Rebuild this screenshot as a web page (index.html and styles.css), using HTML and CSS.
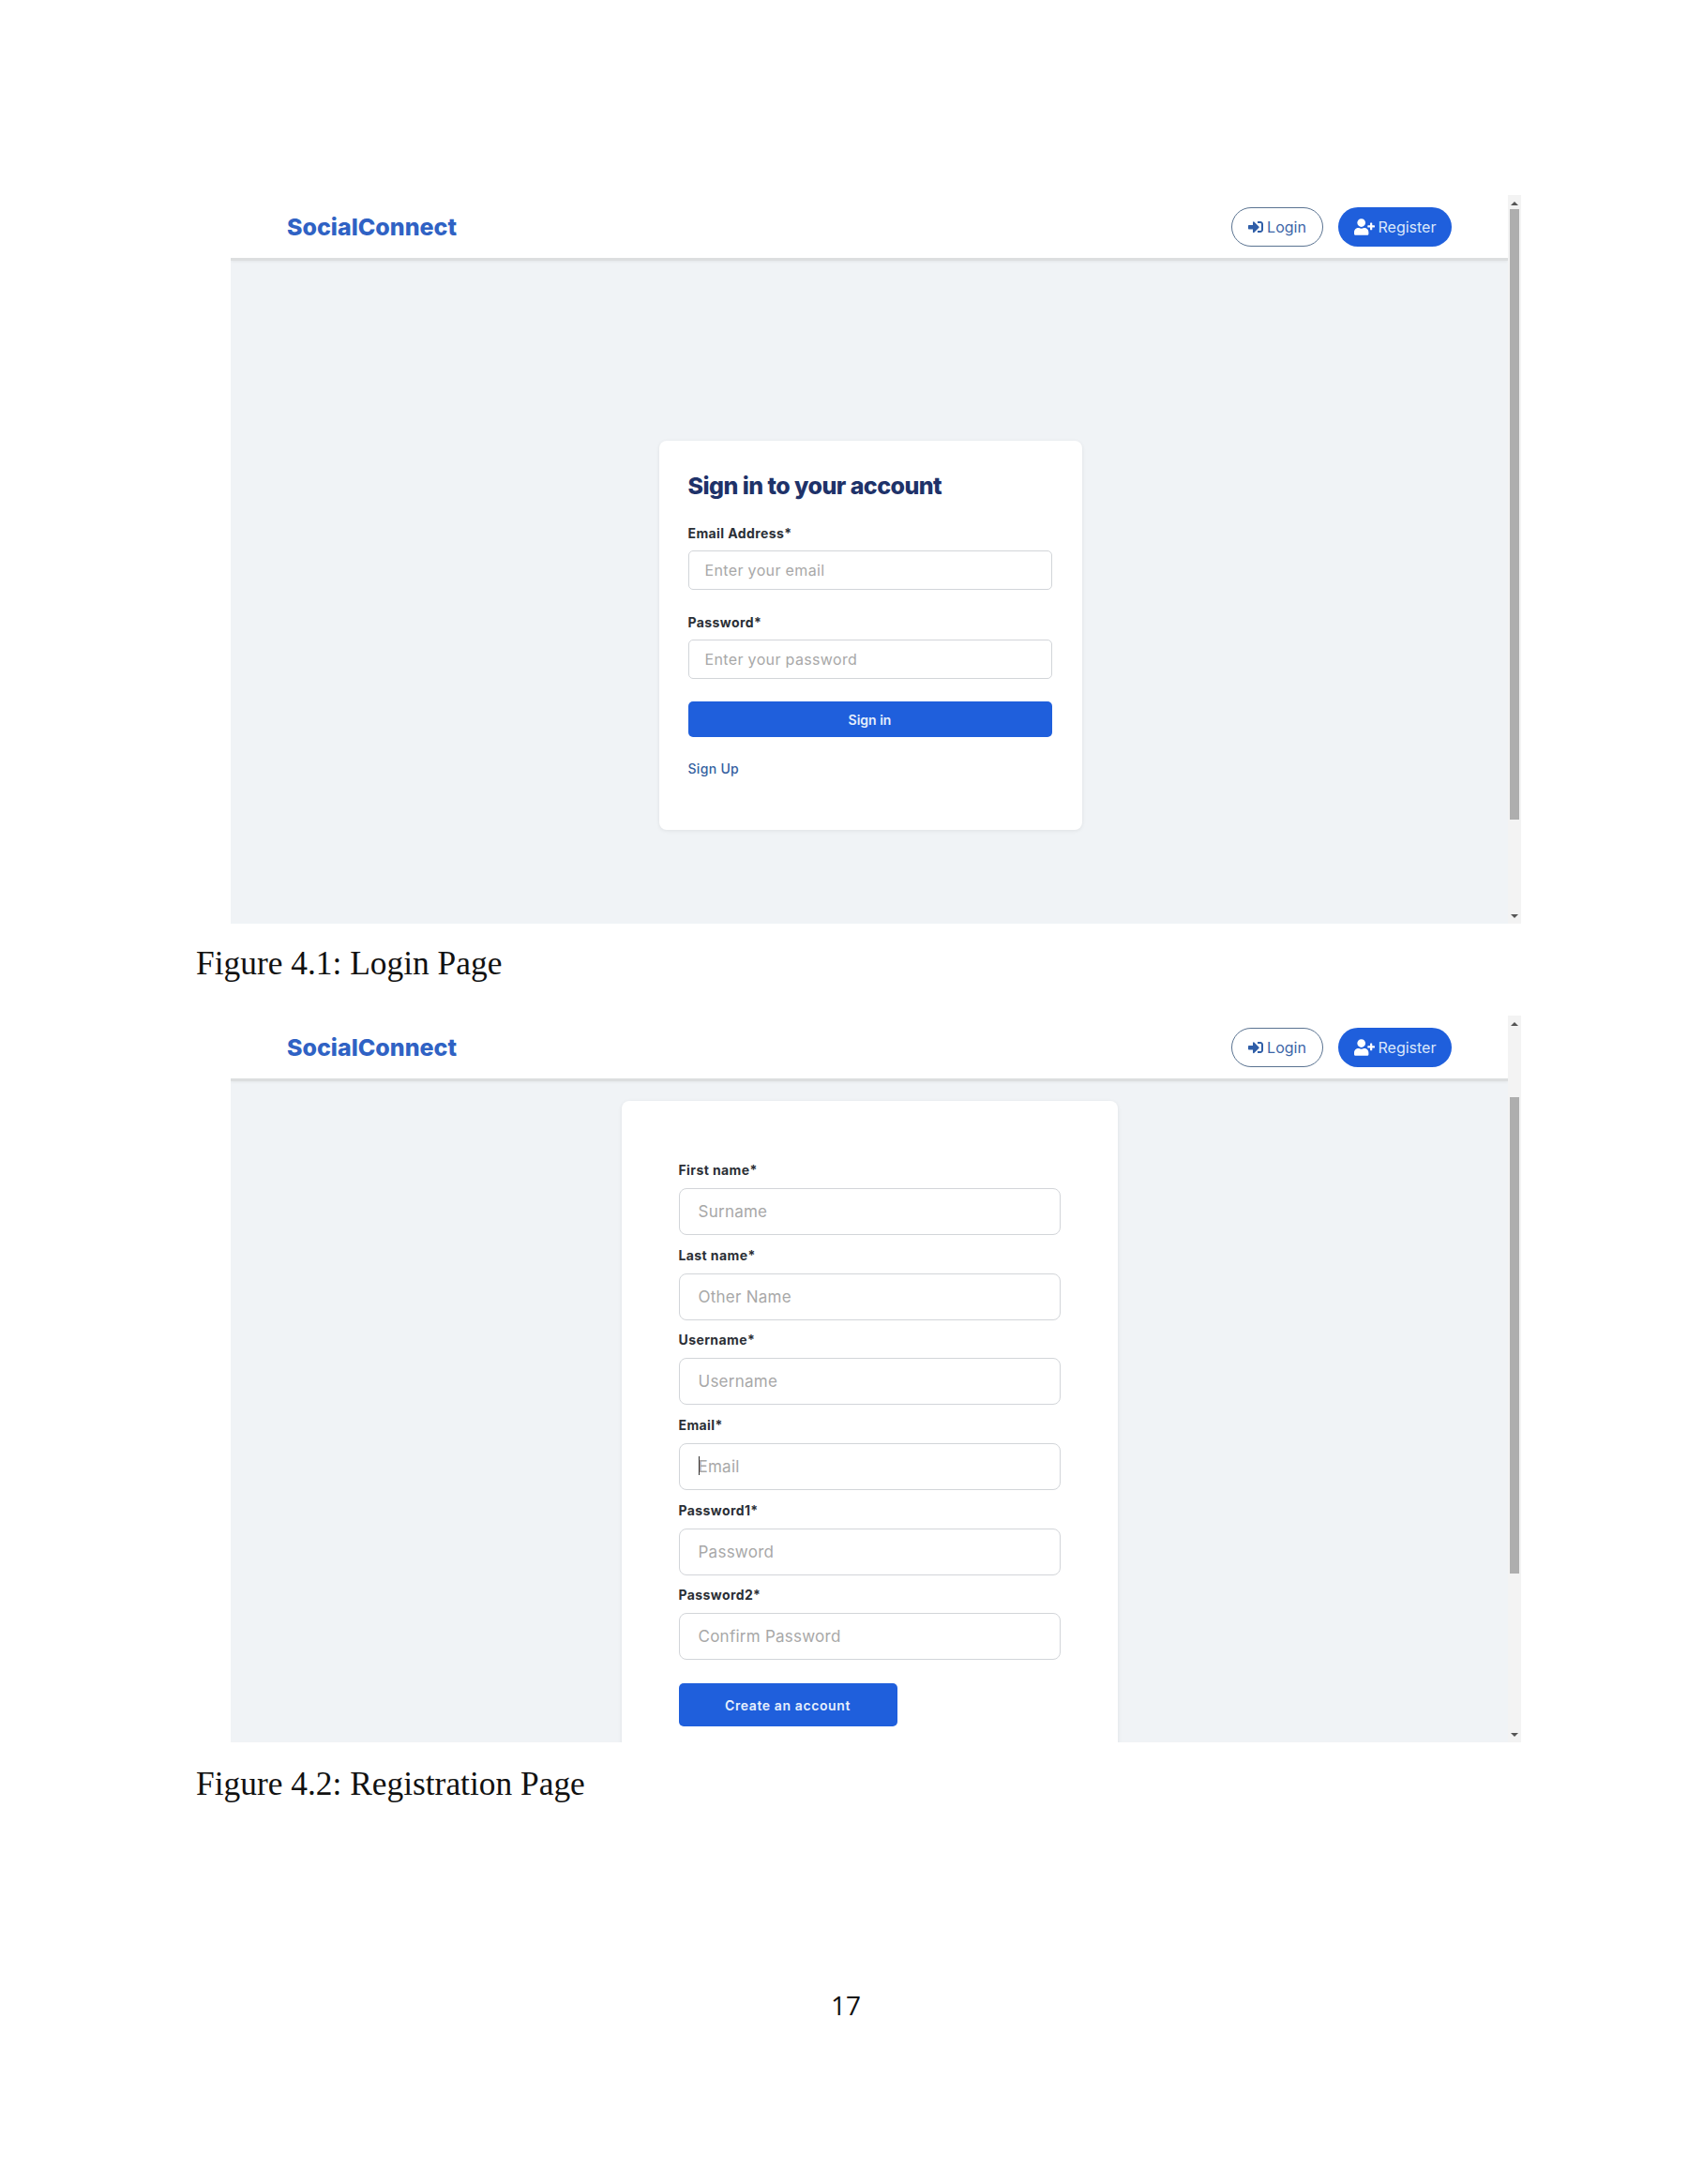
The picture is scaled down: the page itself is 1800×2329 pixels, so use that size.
FILE: index.html
```html
<!DOCTYPE html>
<html lang="en">
<head>
    <meta charset="UTF-8">
    <meta name="viewport" content="width=device-width, initial-scale=1.0">
    <title>Figures</title>
    <link rel="stylesheet" href="styles.css">
</head>
<body>
    <div class="page">
        <!-- Figure 4.1 -->
        <div class="window">
            <div class="viewport">
                <nav class="navbar">
                    <a class="logo">SocialConnect</a>
                    <div class="nav-buttons">
                        <button class="btn-login">
                            <svg class="icon-login" viewBox="0 0 512 512"><path d="M416 448h-84c-6.6 0-12-5.4-12-12v-40c0-6.6 5.4-12 12-12h84c17.7 0 32-14.3 32-32V160c0-17.7-14.3-32-32-32h-84c-6.6 0-12-5.4-12-12V76c0-6.6 5.4-12 12-12h84c53 0 96 43 96 96v192c0 53-43 96-96 96zm-47-201L201 79c-15-15-41-4.5-41 17v96H24c-13.3 0-24 10.7-24 24v96c0 13.3 10.7 24 24 24h136v96c0 21.5 26 32 41 17l168-168c9.3-9.4 9.3-24.6 0-34z"/></svg>
                            Login
                        </button>
                        <button class="btn-register">
                            <svg class="icon-register" viewBox="0 0 640 512"><path d="M624 208h-64v-64c0-8.8-7.2-16-16-16h-32c-8.8 0-16 7.2-16 16v64h-64c-8.8 0-16 7.2-16 16v32c0 8.8 7.2 16 16 16h64v64c0 8.8 7.2 16 16 16h32c8.8 0 16-7.2 16-16v-64h64c8.8 0 16-7.2 16-16v-32c0-8.8-7.2-16-16-16zm-400 48c70.7 0 128-57.3 128-128S294.7 0 224 0 96 57.3 96 128s57.3 128 128 128zm89.6 32h-16.7c-22.2 10.2-46.9 16-72.9 16s-50.6-5.8-72.9-16h-16.7C60.2 288 0 348.2 0 422.4V464c0 26.5 21.5 48 48 48h352c26.5 0 48-21.5 48-48v-41.6c0-74.2-60.2-134.4-134.4-134.4z"/></svg>
                            Register
                        </button>
                    </div>
                </nav>
                <main class="content content-login">
                    <div class="card login-card">
                        <h2>Sign in to your account</h2>
                        <label>Email Address*</label>
                        <input type="text" placeholder="Enter your email">
                        <label class="second">Password*</label>
                        <input type="text" placeholder="Enter your password">
                        <button class="btn-signin">Sign in</button>
                        <a class="signup-link">Sign Up</a>
                    </div>
                </main>
            </div>
            <div class="scrollbar">
                <span class="arrow-up"></span>
                <span class="thumb thumb-login"></span>
                <span class="arrow-down"></span>
            </div>
        </div>
        <p class="caption">Figure 4.1: Login Page</p>

        <!-- Figure 4.2 -->
        <div class="window window-register">
            <div class="viewport">
                <nav class="navbar">
                    <a class="logo">SocialConnect</a>
                    <div class="nav-buttons">
                        <button class="btn-login">
                            <svg class="icon-login" viewBox="0 0 512 512"><path d="M416 448h-84c-6.6 0-12-5.4-12-12v-40c0-6.6 5.4-12 12-12h84c17.7 0 32-14.3 32-32V160c0-17.7-14.3-32-32-32h-84c-6.6 0-12-5.4-12-12V76c0-6.6 5.4-12 12-12h84c53 0 96 43 96 96v192c0 53-43 96-96 96zm-47-201L201 79c-15-15-41-4.5-41 17v96H24c-13.3 0-24 10.7-24 24v96c0 13.3 10.7 24 24 24h136v96c0 21.5 26 32 41 17l168-168c9.3-9.4 9.3-24.6 0-34z"/></svg>
                            Login
                        </button>
                        <button class="btn-register">
                            <svg class="icon-register" viewBox="0 0 640 512"><path d="M624 208h-64v-64c0-8.8-7.2-16-16-16h-32c-8.8 0-16 7.2-16 16v64h-64c-8.8 0-16 7.2-16 16v32c0 8.8 7.2 16 16 16h64v64c0 8.8 7.2 16 16 16h32c8.8 0 16-7.2 16-16v-64h64c8.8 0 16-7.2 16-16v-32c0-8.8-7.2-16-16-16zm-400 48c70.7 0 128-57.3 128-128S294.7 0 224 0 96 57.3 96 128s57.3 128 128 128zm89.6 32h-16.7c-22.2 10.2-46.9 16-72.9 16s-50.6-5.8-72.9-16h-16.7C60.2 288 0 348.2 0 422.4V464c0 26.5 21.5 48 48 48h352c26.5 0 48-21.5 48-48v-41.6c0-74.2-60.2-134.4-134.4-134.4z"/></svg>
                            Register
                        </button>
                    </div>
                </nav>
                <main class="content content-register">
                    <div class="card register-card">
                        <label>First name*</label>
                        <input type="text" placeholder="Surname">
                        <label>Last name*</label>
                        <input type="text" placeholder="Other Name">
                        <label>Username*</label>
                        <input type="text" placeholder="Username">
                        <label>Email*</label>
                        <div class="focused-field">
                            <input type="text" placeholder="Email">
                            <span class="caret"></span>
                        </div>
                        <label>Password1*</label>
                        <input type="text" placeholder="Password">
                        <label>Password2*</label>
                        <input type="text" placeholder="Confirm Password">
                        <button class="btn-create">Create an account</button>
                    </div>
                </main>
            </div>
            <div class="scrollbar">
                <span class="arrow-up"></span>
                <span class="thumb thumb-register"></span>
                <span class="arrow-down"></span>
            </div>
        </div>
        <p class="caption caption-register">Figure 4.2: Registration Page</p>

        <p class="page-number">17</p>
    </div>
</body>
</html>
```

FILE: styles.css
```css
* {
    box-sizing: border-box;
}

body {
    margin: 0;
    background: #fff;
    font-family: Inter, "Open Sans", sans-serif;
}

.page {
    width: 1800px;
    height: 2329px;
    padding: 208px 0 0 209px;
    overflow: hidden;
}

/* Screenshot frame */
.window {
    display: flex;
    width: 1376px;
    height: 777px;
    margin-left: 37px;
}

.window-register {
    height: 775px;
    margin-top: 36px;
}

.viewport {
    flex: 1;
    min-width: 0;
    display: flex;
    flex-direction: column;
    background: #f0f3f6;
    overflow: hidden;
}

.navbar {
    flex: none;
    position: relative;
    height: 70px;
    padding: 0 60px;
    display: flex;
    justify-content: space-between;
    align-items: center;
    background: #fff;
    border-bottom: 3px solid #dcdedf;
    box-shadow: 0 1px 3px rgba(0, 0, 0, 0.06);
}

.logo {
    font-size: 25px;
    font-weight: 800;
    letter-spacing: 0;
    color: #2f62c4;
}

.nav-buttons {
    display: flex;
    gap: 16px;
}

.nav-buttons button {
    height: 42px;
    display: flex;
    align-items: center;
    justify-content: center;
    border-radius: 21px;
    font-family: inherit;
    font-size: 16px;
    letter-spacing: 0;
}

.btn-login {
    width: 98px;
    gap: 4px;
    background: #fff;
    border: 1.5px solid #5a7391;
    color: #3d66a8;
}

.btn-register {
    width: 121px;
    gap: 4px;
    background: #1f5fdc;
    border: none;
    color: #dbe8fb;
}

.icon-login {
    width: 16px;
    height: 16px;
    fill: #2f5ea8;
}

.icon-register {
    width: 22px;
    height: 18px;
    fill: #fff;
}

/* Scrollbar */
.scrollbar {
    flex: none;
    width: 14px;
    display: flex;
    flex-direction: column;
    align-items: center;
    background: #f3f3f3;
}

.thumb {
    width: 10px;
    background: #aeaeae;
}

.thumb-login {
    height: 651px;
    margin-top: 4px;
}

.thumb-register {
    height: 508px;
    margin-top: 76px;
}

.arrow-up, .arrow-down {
    width: 0;
    height: 0;
    border-left: 4px solid transparent;
    border-right: 4px solid transparent;
}

.arrow-up {
    margin-top: 7px;
    border-bottom: 4px solid #555;
}

.arrow-down {
    margin-top: auto;
    margin-bottom: 6px;
    border-top: 4px solid #555;
}

/* Cards */
.content {
    flex: 1;
    display: flex;
    justify-content: center;
    min-height: 0;
}

.content-login {
    padding-top: 192px;
    padding-left: 2px;
}

.content-register {
    padding-top: 21px;
}

.card {
    flex: none;
    background: #fff;
    border-radius: 8px;
    box-shadow: 0 1px 4px rgba(0, 0, 0, 0.08);
    display: flex;
    flex-direction: column;
}

.login-card {
    width: 451px;
    height: 415px;
    padding: 32px 32px 0 31px;
}

.register-card {
    width: 529px;
    height: 720px;
    padding: 65px 61px 0 61px;
}

h2 {
    margin: 0 0 26px;
    font-size: 25px;
    line-height: 32px;
    font-weight: 800;
    letter-spacing: -0.55px;
    color: #1e3269;
}

label {
    display: block;
    font-size: 14px;
    line-height: 18px;
    font-weight: 700;
    letter-spacing: 0.4px;
    color: #2b2f36;
}

input {
    display: block;
    width: 100%;
    background: #fff;
    border: 1px solid #d2d5d9;
    border-radius: 5px;
    outline: none;
    font-family: inherit;
}

input::placeholder {
    color: #a8a8a8;
    opacity: 1;
}

.login-card input {
    height: 42px;
    margin-top: 9px;
    padding: 0 17px;
    font-size: 16px;
    letter-spacing: 0.35px;
}

.login-card label.second {
    margin-top: 26px;
}

.register-card input {
    height: 50px;
    margin-top: 10px;
    margin-bottom: 12.7px;
    padding: 0 20px;
    font-size: 17px;
    letter-spacing: 0.25px;
    border-radius: 8px;
}

.focused-field {
    position: relative;
}

.caret {
    position: absolute;
    left: 21px;
    top: 24px;
    width: 1px;
    height: 20px;
    background: #333;
}

.btn-signin, .btn-create {
    background: #1f5fdc;
    border: none;
    border-radius: 5px;
    color: #e6effc;
    font-family: inherit;
    font-size: 14px;
    font-weight: 600;
}

.btn-signin {
    width: 100%;
    height: 38px;
    margin-top: 24px;
}

.btn-create {
    width: 233px;
    height: 46px;
    margin-top: 12px;
    letter-spacing: 0.6px;
}

.signup-link {
    margin-top: 25px;
    font-size: 14px;
    line-height: 18px;
    font-weight: 500;
    letter-spacing: 0.3px;
    color: #34609f;
}

/* Document text */
.caption {
    margin: 22px 0 0;
    font-family: "Liberation Serif", serif;
    font-size: 35.4px;
    line-height: 40px;
    color: #111;
}

.caption-register {
    margin-top: 24px;
}

.page-number {
    margin: 198px 0 0 677px;
    font-family: "Open Sans", sans-serif;
    font-size: 28px;
    line-height: 36px;
    color: #111;
}
```
